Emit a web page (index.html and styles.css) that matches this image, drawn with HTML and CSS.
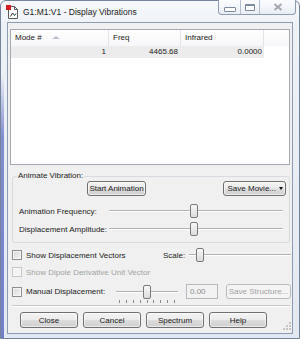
FILE: index.html
```html
<!DOCTYPE html>
<html lang="en">
<head>
    <meta charset="UTF-8">
    <title>G1:M1:V1 - Display Vibrations</title>
    <link rel="stylesheet" href="styles.css">
</head>
<body>
    <div class="window">
        <div class="titlebar">
            <svg class="app-icon" width="13" height="14" viewBox="0 0 13 14">
                <path d="M2.5 1.5h6l3 3v9h-9z" fill="#fff" stroke="#5a5a5a"/>
                <path d="M8.5 1.5v3h3" fill="none" stroke="#5a5a5a"/>
                <rect x="0" y="0" width="5" height="5" fill="#d42020"/>
                <path d="M4.5 11.5l2-3.5 2 2.5 1.5-2" fill="none" stroke="#333"/>
            </svg>
            <span class="title">G1:M1:V1 - Display Vibrations</span>
            <div class="caption">
                <span class="cap-btn cap-min"><i></i></span>
                <span class="cap-btn cap-max"><i></i></span>
                <span class="cap-btn cap-close">
                    <svg width="10" height="8" viewBox="0 0 10 8">
                        <path d="M1.5 1l7 6M8.5 1l-7 6" stroke="#a4a8ad" stroke-width="2"/>
                    </svg>
                </span>
            </div>
        </div>

        <div class="client">
            <div class="list">
                <div class="list-head">
                    <div class="head-cell">Mode # <span class="sort"></span></div>
                    <div class="head-cell">Freq</div>
                    <div class="head-cell">Infrared</div>
                    <div class="head-cell last"></div>
                </div>
                <div class="list-row">
                    <div>1</div>
                    <div>4465.68</div>
                    <div>0.0000</div>
                </div>
            </div>

            <div class="group">
                <div class="group-title">Animate Vibration:</div>
                <div class="group-buttons">
                    <button class="btn btn-start">Start Animation</button>
                    <button class="btn btn-movie">Save Movie...<span class="drop"></span></button>
                </div>
                <div class="slider-row first">
                    <span class="slider-label">Animation Frequency:</span>
                    <div class="slider" style="--v: 0.49"><span class="thumb"></span></div>
                </div>
                <div class="slider-row">
                    <span class="slider-label">Displacement Amplitude:</span>
                    <div class="slider" style="--v: 0.485"><span class="thumb"></span></div>
                </div>
            </div>

            <div class="check-row vectors">
                <span class="checkbox"></span>
                <span class="check-label wide">Show Displacement Vectors</span>
                <span class="scale-label">Scale:</span>
                <div class="slider scale" style="--v: 0.07"><span class="thumb"></span></div>
            </div>

            <div class="check-row dipole disabled">
                <span class="checkbox"></span>
                <span class="check-label">Show Dipole Derivative Unit Vector</span>
            </div>

            <div class="check-row manual">
                <span class="checkbox"></span>
                <span class="check-label narrow">Manual Displacement:</span>
                <div class="slider manual-slider" style="--v: 0.5"><span class="thumb"></span></div>
                <span class="textbox">0.00</span>
                <button class="btn btn-structure" disabled>Save Structure...</button>
            </div>

            <div class="ticks">
                <i></i><i></i><i></i><i></i><i></i><i></i><i></i><i></i><i></i>
            </div>

            <div class="separator"></div>

            <div class="dialog-buttons">
                <button class="btn">Close</button>
                <button class="btn">Cancel</button>
                <button class="btn">Spectrum</button>
                <button class="btn">Help</button>
                <svg class="grip" width="8" height="8" viewBox="0 0 8 8">
                    <rect x="6" y="0" width="2" height="2" fill="#c4c4c4"/>
                    <rect x="3" y="3" width="2" height="2" fill="#c4c4c4"/>
                    <rect x="6" y="3" width="2" height="2" fill="#c4c4c4"/>
                    <rect x="0" y="6" width="2" height="2" fill="#c4c4c4"/>
                    <rect x="3" y="6" width="2" height="2" fill="#c4c4c4"/>
                    <rect x="6" y="6" width="2" height="2" fill="#c4c4c4"/>
                </svg>
            </div>
        </div>
    </div>
</body>
</html>
```

FILE: styles.css
```css
body {
    margin: 0;
    background-color: #fff;
    font-family: 'Liberation Sans', Arial, sans-serif;
    font-size: 8px;
    color: #1b1b1b;
}

.window {
    width: 298px;
    height: 337px;
    border: 1px solid #75849b;
    border-radius: 6px 6px 0 0;
    display: flex;
    flex-direction: column;
    background:
        linear-gradient(to bottom, rgba(120, 130, 205, 0) 22%, rgba(120, 130, 205, 0.9) 40%, rgba(110, 120, 200, 0.95) 100%) left top / 3px 100% no-repeat,
        linear-gradient(to bottom, #f6f8fb 0, #edf2f7 25px, #e2e9f2 100%);
}

/* Title bar */
.titlebar {
    height: 21px;
    display: flex;
    align-items: flex-start;
    flex: none;
}

.app-icon {
    flex: none;
    margin: 4px 0 0 5px;
}

.title {
    margin: 5px 0 0 4px;
    line-height: 12px;
    font-size: 8.5px;
    color: #222;
}

.caption {
    display: flex;
    height: 14px;
    margin: -1px 3px 0 auto;
    border: 1px solid #8d9bb0;
    border-top: none;
    border-radius: 0 0 4px 4px;
    background: linear-gradient(to bottom, #fbfcfe, #e8eef5);
    overflow: hidden;
}

.cap-btn {
    display: flex;
    align-items: center;
    justify-content: center;
}

.cap-min {
    width: 21px;
    border-right: 1px solid #b3bfcf;
}

.cap-min i {
    width: 10px;
    height: 3px;
    margin-top: 4px;
    border: 1px solid #7d8ba0;
    border-radius: 1px;
    background: #fff;
}

.cap-max {
    width: 18px;
    border-right: 1px solid #b3bfcf;
}

.cap-max i {
    width: 8px;
    height: 4px;
    border: 1px solid #7d8ba0;
    border-top-width: 2px;
    border-radius: 1px;
    background: #fff;
}

.cap-close {
    width: 35px;
}

/* Client area */
.client {
    flex: none;
    height: 310px;
    margin: 0 6px 4px;
    border: 1px solid #8d9cb2;
    background-color: #f0f0f0;
}

.list {
    height: 134px;
    margin: 6px 2px 0;
    border: 1px solid #a3aab3;
    background-color: #fff;
}

.list-head {
    display: grid;
    grid-template-columns: 98px 72px 83px 1fr;
    height: 16px;
    background: linear-gradient(to bottom, #fff, #f6f7f9);
}

.head-cell {
    padding-left: 4px;
    line-height: 16px;
    border-right: 1px solid #e1e4e8;
    color: #222;
    white-space: nowrap;
}

.head-cell.last {
    border-right: none;
}

.sort {
    display: inline-block;
    margin-left: 8px;
    vertical-align: 1px;
    border-left: 4px solid transparent;
    border-right: 4px solid transparent;
    border-bottom: 3px solid #b9c2cc;
}

.list-row {
    display: grid;
    grid-template-columns: 98px 72px 83px;
    width: 253px;
    height: 12px;
    background-color: #ececec;
}

.list-row div {
    text-align: right;
    padding-right: 3px;
    line-height: 12px;
}

.list-row div:last-child {
    padding-right: 2px;
}

/* Group box */
.group {
    margin: 11px 2px 0 4px;
    padding-bottom: 6px;
    border: 1px solid #d5dbe0;
    border-radius: 3px;
}

.group-title {
    width: fit-content;
    margin: -6px 0 0 4px;
    padding: 0 1px;
    line-height: 10px;
    background-color: #f0f0f0;
}

.group-buttons {
    display: flex;
    justify-content: space-between;
    height: 15px;
    padding: 0 3px 0 74px;
}

.btn {
    box-sizing: border-box;
    height: 100%;
    padding: 0;
    border: 1px solid #707070;
    border-radius: 3px;
    background: linear-gradient(to bottom, #f3f3f3 0, #ebebeb 48%, #dddddd 52%, #cfcfcf 100%);
    box-shadow: inset 0 0 0 1px rgba(255, 255, 255, 0.6);
    font-family: inherit;
    font-size: 8px;
    color: #1b1b1b;
    text-align: center;
    white-space: nowrap;
}

.btn-start {
    width: 59px;
}

.btn-movie {
    width: 63px;
    display: flex;
    align-items: center;
    justify-content: flex-end;
    padding-right: 2px;
}

.drop {
    margin-left: 3px;
    border-left: 2.5px solid transparent;
    border-right: 2.5px solid transparent;
    border-top: 3px solid #111;
}

.btn:disabled {
    border-color: #b8bcc0;
    background: #f4f4f4;
    box-shadow: none;
    color: #a3a3a3;
}

/* Sliders */
.slider-row {
    display: flex;
    align-items: center;
    height: 14px;
    margin-top: 4px;
    padding: 0 6px;
}

.slider-row.first {
    margin-top: 8px;
}

.slider-label {
    flex: none;
    width: 90px;
    white-space: nowrap;
}

.slider {
    flex: 1;
    height: 14px;
    display: flex;
    background: linear-gradient(to bottom, transparent 6px, #b2b2b2 6px, #b2b2b2 7px, #fff 7px, #fff 8px, transparent 8px);
}

.thumb {
    box-sizing: border-box;
    width: 8px;
    height: 14px;
    margin-left: calc((100% - 8px) * var(--v));
    border: 1px solid #7a7a7a;
    border-radius: 2px;
    background: linear-gradient(to bottom, #f8f8f8, #dcdcdc);
}

/* Check rows */
.check-row {
    display: flex;
    align-items: center;
    height: 14px;
    padding-left: 4px;
    white-space: nowrap;
}

.check-row.vectors {
    margin-top: 5px;
}

.check-row.dipole {
    margin-top: 3px;
}

.check-row.manual {
    height: 15px;
    margin-top: 5px;
}

.checkbox {
    flex: none;
    box-sizing: border-box;
    width: 10px;
    height: 10px;
    margin-right: 4px;
    border: 1px solid #8e8f8f;
    box-shadow: inset 0 0 0 1px #f6f6f6;
    background: linear-gradient(135deg, #d6d6d6, #f7f7f7);
}

.check-row.disabled {
    color: #a3a3a3;
}

.check-row.disabled .checkbox {
    border-color: #c8c8c8;
    background: #f4f4f4;
}

.check-label.wide {
    width: 137px;
}

.check-label.narrow {
    width: 90px;
}

.scale-label {
    margin-right: 4px;
}

.slider.scale {
    margin-right: 1px;
}

.slider.manual-slider {
    flex: none;
    width: 62px;
}

.textbox {
    box-sizing: border-box;
    width: 32px;
    height: 15px;
    margin-left: 8px;
    padding-left: 3px;
    line-height: 13px;
    border: 1px solid #b5b9be;
    background-color: #f2f2f2;
    color: #8c8c8c;
}

.btn-structure {
    width: 65px;
    margin-left: 8px;
}

.ticks {
    display: flex;
    justify-content: space-between;
    width: 56px;
    height: 3px;
    margin: 1px 0 0 111px;
}

.ticks i {
    width: 1px;
    height: 3px;
    background-color: #8a8a8a;
}

.separator {
    margin: 2px 2px 0 4px;
    border-top: 1px solid #c6c6c6;
    border-bottom: 1px solid #fff;
}

.dialog-buttons {
    display: flex;
    gap: 5px;
    height: 16px;
    margin-top: 5px;
    padding: 0 2px 0 12px;
}

.dialog-buttons .btn {
    width: 58px;
}

.grip {
    margin: 0 -1px -2px auto;
    align-self: flex-end;
}
```
